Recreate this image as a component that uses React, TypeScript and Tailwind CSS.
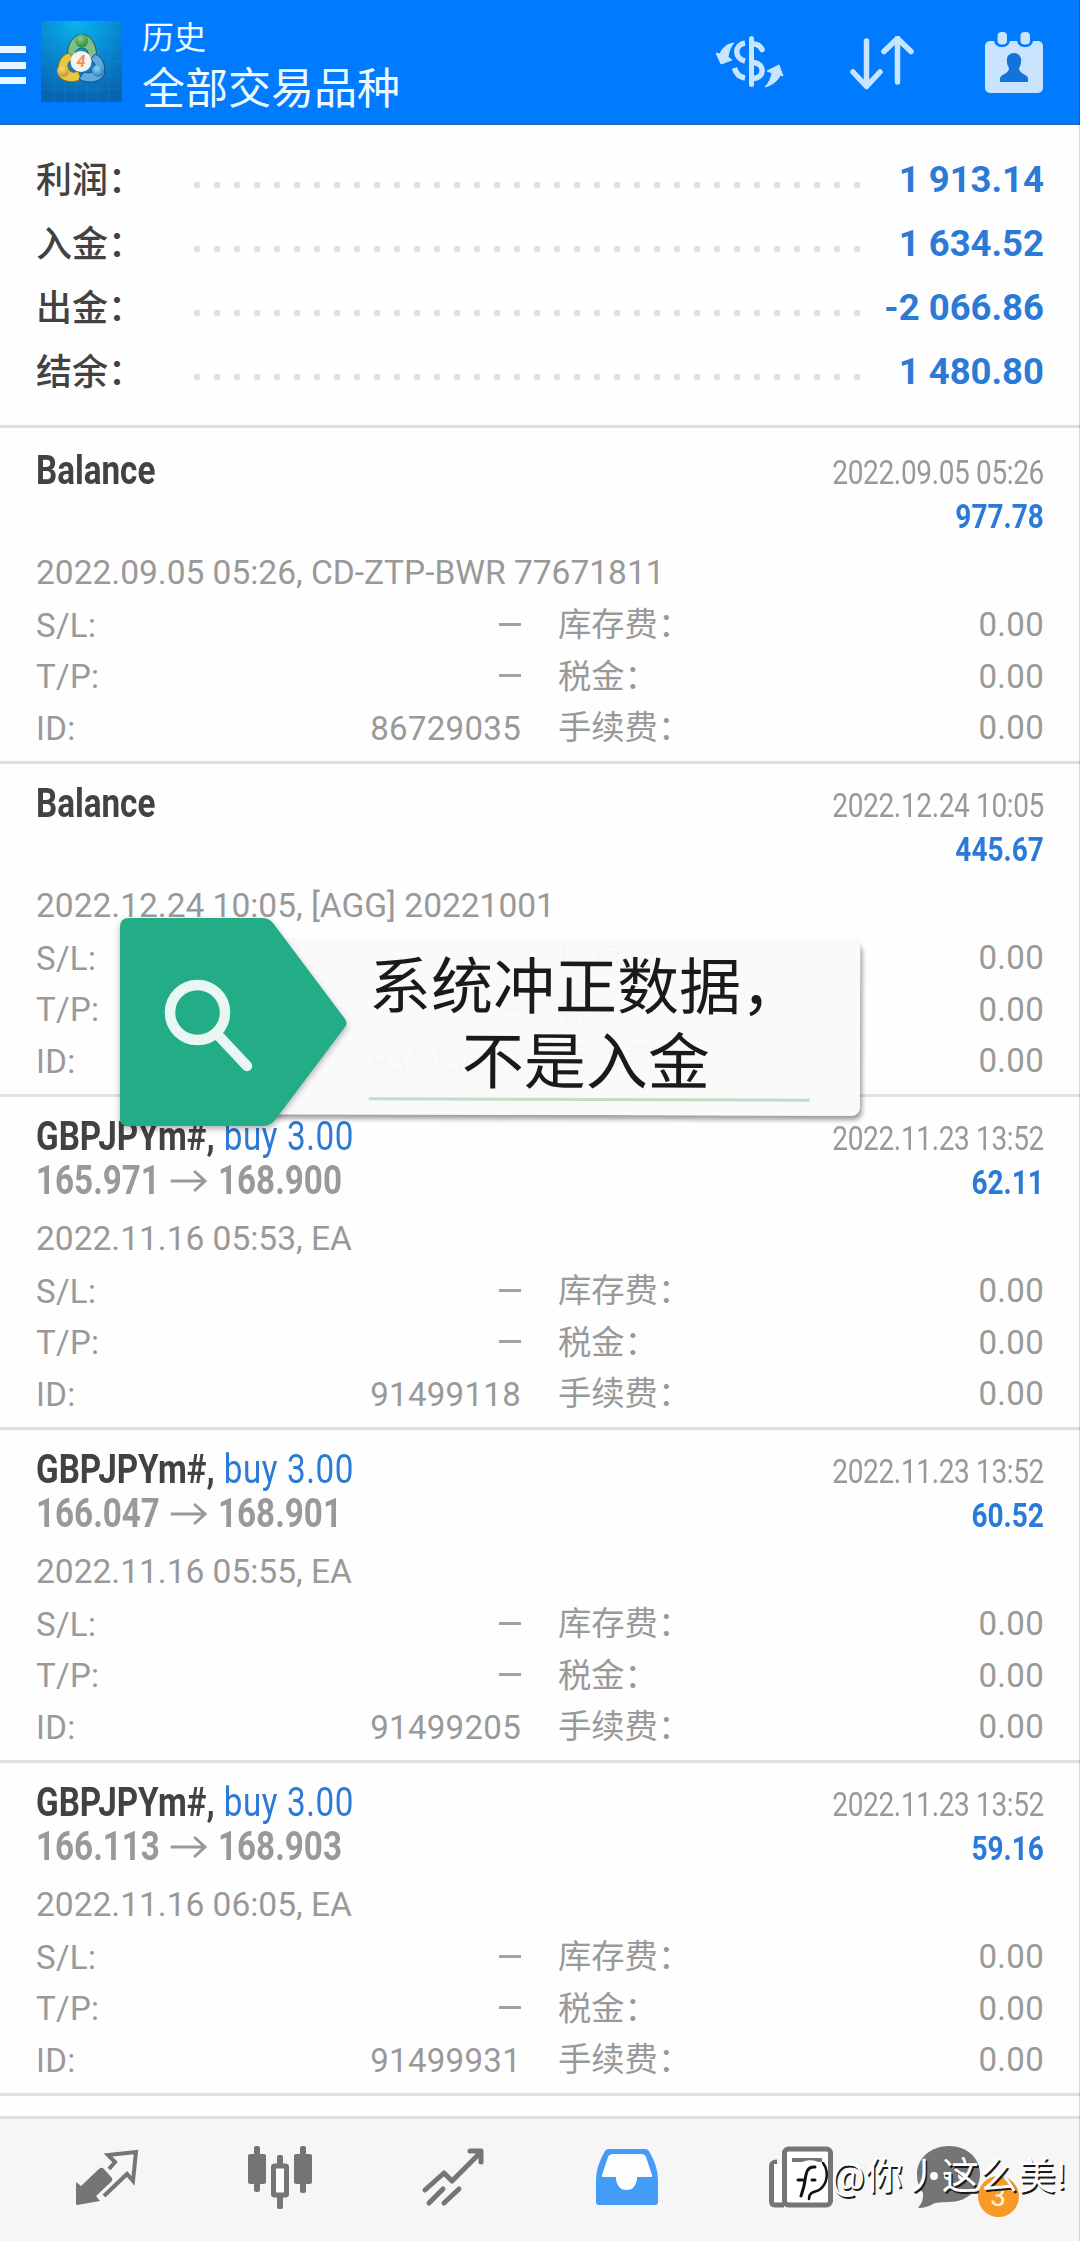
import type { ReactNode } from 'react'

const summary = [
  { label: '利润：', value: '1 913.14' },
  { label: '入金：', value: '1 634.52' },
  { label: '出金：', value: '-2 066.86' },
  { label: '结余：', value: '1 480.80' },
]

type Deal = {
  symbol: string
  side?: string
  open?: string
  close?: string
  time: string
  profit: string
  comment: string
  id: string
}

const deals: Deal[] = [
  { symbol: 'Balance', time: '2022.09.05 05:26', profit: '977.78', comment: '2022.09.05 05:26, CD-ZTP-BWR 77671811', id: '86729035' },
  { symbol: 'Balance', time: '2022.12.24 10:05', profit: '445.67', comment: '2022.12.24 10:05, [AGG] 20221001', id: '93543099' },
  { symbol: 'GBPJPYm#,', side: 'buy 3.00', open: '165.971', close: '168.900', time: '2022.11.23 13:52', profit: '62.11', comment: '2022.11.16 05:53, EA', id: '91499118' },
  { symbol: 'GBPJPYm#,', side: 'buy 3.00', open: '166.047', close: '168.901', time: '2022.11.23 13:52', profit: '60.52', comment: '2022.11.16 05:55, EA', id: '91499205' },
  { symbol: 'GBPJPYm#,', side: 'buy 3.00', open: '166.113', close: '168.903', time: '2022.11.23 13:52', profit: '59.16', comment: '2022.11.16 06:05, EA', id: '91499931' },
]

function AppLogo() {
  return (
    <svg className="ml-[15px] h-[81px] w-[81px] shrink-0" viewBox="0 0 81 81">
      <defs>
        <radialGradient id="sky" cx="0.45" cy="0" r="1">
          <stop offset="0" stopColor="#08b5ee" />
          <stop offset="0.6" stopColor="#087fcb" />
          <stop offset="1" stopColor="#0764ae" />
        </radialGradient>
        <radialGradient id="green" cx="0.4" cy="0.3" r="0.8">
          <stop offset="0" stopColor="#8ccf8c" />
          <stop offset="1" stopColor="#20803c" />
        </radialGradient>
        <radialGradient id="yellow" cx="0.4" cy="0.3" r="0.8">
          <stop offset="0" stopColor="#f8e27a" />
          <stop offset="1" stopColor="#b98c1c" />
        </radialGradient>
        <radialGradient id="blue" cx="0.4" cy="0.3" r="0.8">
          <stop offset="0" stopColor="#8fd0f5" />
          <stop offset="1" stopColor="#1e6fb4" />
        </radialGradient>
      </defs>
      <rect width="81" height="81" fill="url(#sky)" />
      <path d="M13 0V81M24 0V81M35 0V81M46 0V81M57 0V81M68 0V81M0 13H81M0 27H81M0 40H81M0 54H81M0 68H81" stroke="#2c9ee0" strokeOpacity="0.2" />
      <path d="M27 39C25 27 29 18 37 14H45C53 18 57 29 55 39L47 37C48 31 46 27 41 27S33 31 34 37Z" fill="#7fbf86" stroke="#25603a" />
      <path d="M28 32C19 34 16 44 17 54C21 61 33 63 40 58L37 50C32 53 27 50 27 46C26 42 29 39 33 38Z" fill="#e6c845" stroke="#856b17" />
      <path d="M54 33C62 36 65 45 63 54C58 62 46 63 38 58L43 51C49 53 54 51 54 47C55 43 52 40 49 39Z" fill="#5fa9dc" stroke="#1e4f7d" />
      <circle cx="40.500" cy="20" r="6.500" fill="url(#green)" />
      <circle cx="22" cy="50" r="6" fill="url(#yellow)" />
      <circle cx="57" cy="50" r="6" fill="url(#blue)" />
      <circle cx="40" cy="40.500" r="10.500" fill="#f7f3ec" />
      <text x="40" y="46" textAnchor="middle" fontFamily="Roboto, sans-serif" fontSize="16" fontWeight="700" fontStyle="italic" fill="#e8935a">4</text>
    </svg>
  )
}

function Header() {
  return (
    <header className="flex h-[125px] items-center border-b-2 border-[#2a6cb0] bg-[#007aff] text-[#ecfaff]">
      <div className="mt-[7px] flex h-[38px] w-[26px] shrink-0 flex-col justify-between">
        <div className="h-[7px] bg-[#e6f8ff]" />
        <div className="h-[7px] bg-[#e6f8ff]" />
        <div className="h-[7px] bg-[#e6f8ff]" />
      </div>
      <AppLogo />
      <div className="mt-[12px] ml-5 flex flex-col">
        <div className="text-[32px] leading-[43px]">历史</div>
        <div className="text-[43px] leading-[59px]">全部交易品种</div>
      </div>
      <svg className="mt-[1px] ml-auto h-[54px] w-[70px]" viewBox="0 0 70 54" fill="none" stroke="#c9e4ff" strokeWidth="5">
        <path d="M35.500 3.500V49.500" strokeLinecap="round" />
        <path d="M29 8C18 10 18 23 29 26M18.500 33C20 39 23 42 29 43" strokeWidth="5.500" />
        <path d="M38 9C42 9 44 11 46 14.500M38 27.500C49 29 49 43 37 43.500" strokeLinecap="round" strokeWidth="5.500" />
        <path d="M18 8C11 9 6 13 4 19L0 18L5 29L16 25L12 22C13 17 14 12 18 8Z" fill="#c9e4ff" stroke="#c9e4ff" strokeWidth="1" strokeLinejoin="round" />
        <path d="M49 52C56 50 62 46 64 40L67 41L63 30L51 36L56 38C55 43 53 48 49 52Z" fill="#c9e4ff" stroke="#c9e4ff" strokeWidth="1" strokeLinejoin="round" />
      </svg>
      <svg className="mt-[2px] ml-[64px] h-[54px] w-[64px]" viewBox="0 0 64 54" fill="none" stroke="#c9e4ff" strokeWidth="5.500" strokeLinecap="round" strokeLinejoin="round">
        <path d="M16.500 5V50M3 36L16.500 50.500L30 36" />
        <path d="M47.500 46V2M34 15.500L47.500 2.500L61 15.500" />
      </svg>
      <svg className="mt-[2px] mr-[36px] ml-[70px] h-[62px] w-[60px]" viewBox="0 0 60 62">
        <rect x="1" y="9" width="58" height="52" rx="5" fill="#c9e4ff" />
        <rect x="10" y="-4" width="16" height="19" rx="7" fill="#007aff" />
        <rect x="33" y="-4" width="16" height="19" rx="7" fill="#007aff" />
        <rect x="13.500" y="0" width="9.500" height="12.500" rx="4" fill="#c9e4ff" />
        <rect x="36.500" y="0" width="9.500" height="12.500" rx="4" fill="#c9e4ff" />
        <path d="M30 21C35 21 38 25 37 30C37 33 36 34 35 36C35 42 43 42 44 46V50H16V46C17 42 25 42 25 36C24 34 23 33 23 30C22 25 25 21 30 21Z" fill="#1573d8" />
      </svg>
    </header>
  )
}

function Summary() {
  return (
    <section className="h-[303px] border-b-[3px] border-[#e0e0e0] pt-[24px] pr-[36px] pl-9">
      {summary.map((row) => (
        <div key={row.label} className="flex h-16 items-center">
          <div className="w-[154px] text-[36px] font-medium whitespace-nowrap text-[#424242]">{row.label}</div>
          <svg className="mt-[8px] h-2 w-[680px]" viewBox="0 0 680 8">
            <path d="M7 4H668" stroke="#e0e0e0" strokeWidth="6.500" strokeLinecap="round" strokeDasharray="0 20" />
          </svg>
          <div className="mb-[2px] ml-auto text-[36.500px] font-bold whitespace-nowrap text-[#2b7ad6]">{row.value}</div>
        </div>
      ))}
    </section>
  )
}

function Detail({ label, value, fee }: { label: string; value: string; fee: string }) {
  return (
    <div className="flex h-[51.500px] items-center text-[33px] text-[#999999]">
      <div className="tracking-[0.3px]">{label}</div>
      <div className="ml-auto tracking-[0.3px]">{value === '' ? <div className="mb-[2px] h-[3px] w-[22px] bg-[#a2a2a2]" /> : value}</div>
      <div className="ml-[37px] flex w-[486px] justify-between">
        <span className="text-[33.300px]">{fee}</span>
        <span className="tracking-[0.3px]">0.00</span>
      </div>
    </div>
  )
}

function DealRow({ deal }: { deal: Deal }) {
  return (
    <article className="h-[333px] border-b-[3px] border-[#e0e0e0] pt-[17px] pr-[36px] pl-9">
      <div className="flex h-[98.500px] justify-between">
        <div className="origin-left scale-x-[0.83] pt-[1px] text-[40px] leading-[44px] font-bold whitespace-nowrap">
          <div className="text-[#424242]">
            {deal.symbol} <span className="ml-[1px] font-normal tracking-[0.7px] text-[#2b7ad6]">{deal.side}</span>
          </div>
          {deal.open && (
            <div className="flex items-center text-[#999999]">
              {deal.open}
              <svg className="mx-[13px] h-6 w-[44px]" viewBox="0 0 37 24" preserveAspectRatio="none" fill="none" stroke="#999999" strokeWidth="3">
                <path d="M0 12H35M24 2L35 12L24 22" />
              </svg>
              {deal.close}
            </div>
          )}
        </div>
        <div className="origin-right scale-x-[0.85] pt-[3px] text-right text-[33px] leading-[44px] text-[#999999]">
          <div className="tracking-[-0.45px]">{deal.time}</div>
          <div className="font-bold text-[#2b7ad6]">{deal.profit}</div>
        </div>
      </div>
      <div className="flex h-[53px] items-center text-[33.500px] whitespace-pre text-[#999999]">{deal.comment}</div>
      <Detail label="S/L:" value="" fee="库存费：" />
      <Detail label="T/P:" value="" fee="税金：" />
      <Detail label="ID:" value={deal.id} fee="手续费：" />
    </article>
  )
}

// floating note that lies over the list
function Note() {
  return (
    <div className="absolute top-[910px] left-[112px] h-[230px] w-[760px]">
      <div className="absolute top-[30px] left-[150px] h-[175px] w-[598px] rotate-[0.15deg] rounded-[8px] bg-[#fafafa]/97 shadow-[2px_4px_5px_rgba(0,0,0,0.4)]" />
      <svg className="absolute inset-0 drop-shadow-[0_3px_3px_rgba(0,0,0,0.3)]" width="760" height="230" viewBox="0 0 760 230">
        <path d="M17 8H150Q157 8 161 13L233 109Q236 113 233 117L163 210Q158 216 151 216H16Q8 216 8 208V17Q8 8 17 8Z" fill="#22ad87" />
        <circle cx="85.500" cy="102.500" r="27.500" fill="none" stroke="#e9f7f3" strokeWidth="10.500" />
        <path d="M105 124L135 156" stroke="#e9f7f3" strokeWidth="10.500" strokeLinecap="round" />
      </svg>
      <div className="absolute top-[38px] left-[257px] w-[441px] rotate-[0.2deg] border-b-[3px] border-[#bfe0c8]">
        <div className="-ml-[7px] h-[150px] pt-[3px] text-center text-[62px] leading-[74.500px] whitespace-nowrap text-[#1a1a1a]">
          系统冲正数据，
          <br />
          不是入金
        </div>
      </div>
    </div>
  )
}

function NavItem({ children }: { children: ReactNode }) {
  return <div className="relative flex h-[117px] items-center justify-center">{children}</div>
}

function BottomNav() {
  return (
    <nav className="mt-5 grid h-[125px] grid-cols-6 border-t-[3px] border-[#e0e0e0] bg-[#f6f6f6] px-5">
      <NavItem>
        <svg width="64" height="64" viewBox="0 0 64 64">
          <path d="M1 36L6 40L25 22Q27 21 29 23L37 32Q38 34 36 36L21 50L25 55L2 59Q1 59 1 58Z" fill="#757575" />
          <path d="M34 23L40 16L33 9L61 6L58 35L52 28L29 50" fill="none" stroke="#757575" strokeWidth="4" />
        </svg>
      </NavItem>
      <NavItem>
        <svg width="64" height="64" viewBox="0 0 64 64" fill="#757575">
          <rect x="0" y="8" width="18" height="30" rx="2" />
          <rect x="6" y="0" width="6" height="46" rx="2" />
          <rect x="46" y="8" width="18" height="30" rx="2" />
          <rect x="52" y="0" width="6" height="47" rx="2" />
          <rect x="29" y="9" width="6" height="10" rx="2" />
          <rect x="29" y="48" width="6" height="15" rx="2" />
          <rect x="25.500" y="20" width="13" height="29" rx="1" fill="#fff" stroke="#757575" strokeWidth="5" />
        </svg>
      </NavItem>
      <NavItem>
        <svg width="64" height="64" viewBox="0 0 64 64" fill="none" stroke="#757575" strokeWidth="5" strokeLinecap="round" strokeLinejoin="round">
          <path d="M4 44L23 27L31 35L60 6M49 5H60V16" />
          <path d="M8 57L22 43M23 57L38 43" />
        </svg>
      </NavItem>
      <NavItem>
        <svg width="64" height="64" viewBox="0 0 64 64">
          <path d="M14 3H50Q53 3 54 5Q63 20 63 34V56Q63 59 60 59H4Q1 59 1 56V34Q1 20 10 5Q11 3 14 3Z" fill="#429cf8" />
          <path d="M19 8Q14 8 13 11L7 29Q6 31 9 31H21V34Q23 44 31.500 44T42 34V31H55Q58 31 57 29L51 11Q50 8 46 8Z" fill="#fdfdfd" />
        </svg>
      </NavItem>
      <NavItem>
        <svg className="ml-[2px]" width="66" height="64" viewBox="0 0 66 64" fill="none" stroke="#757575" strokeWidth="5">
          <path d="M16 59H7Q3.500 59 3.500 55V20Q3.500 16 9 16" />
          <rect x="6" y="18" width="8" height="38" fill="#fff" stroke="none" />
          <rect x="16.500" y="3" width="46" height="56" rx="4" fill="#fff" />
          <path d="M24 14H54" strokeWidth="4" />
        </svg>
      </NavItem>
      <NavItem>
        <svg className="-ml-12" width="64" height="64" viewBox="0 0 64 64">
          <path d="M32 0C50 0 63 12 63 28S50 56 32 56Q24 56 18 57Q10 62 1 62Q7 55 6 47Q0 40 0 28C0 12 14 0 32 0Z" fill="#757575" />
          <circle cx="17" cy="30" r="4" fill="#fff" />
          <circle cx="31" cy="30" r="4" fill="#fff" />
          <circle cx="45" cy="30" r="4" fill="#fff" />
        </svg>
        <div className="absolute top-[57px] left-[91px] flex h-[41px] w-[41px] items-center justify-center rounded-full bg-[#f79a26] text-[28px] text-[#fff3dc]">3</div>
      </NavItem>
    </nav>
  )
}

function Watermark() {
  return (
    <div className="absolute top-[2148px] left-[790px] flex h-14 items-center text-[37.500px] tracking-[0.7px] whitespace-nowrap text-white [text-shadow:1.5px_1.5px_0_#1a1a1a]">
      <svg className="mt-2 h-[46px] w-[41px]" viewBox="0 0 41 46" fill="none" strokeLinecap="round">
        <path d="M12 5C24 0 36 6 36 19C36 28 30 33 25 34L19 41L12 38Z" fill="#fff" />
        <path d="M33 6C39 14 38 27 29 33C26 35 19 34 19 42" stroke="#111" strokeWidth="2.500" />
        <path d="M25 10C15 9 16 20 14 29L11 39M8 23H13M22 23H25" stroke="#111" strokeWidth="3" />
      </svg>
      <span>@你丿这么美!</span>
    </div>
  )
}

export default function App() {
  return (
    <div className="relative h-[2241px] w-[1080px] overflow-hidden bg-[#fefefe] font-[Roboto,'Noto_Sans_CJK_SC',sans-serif]">
      <Header />
      <Summary />
      <main className="pt-[3px]">
        {deals.map((deal) => (
          <DealRow key={deal.id} deal={deal} />
        ))}
      </main>
      <BottomNav />
      <Note />
      <Watermark />
      <div className="absolute top-0 right-0 h-full w-px bg-black/15" />
    </div>
  )
}
